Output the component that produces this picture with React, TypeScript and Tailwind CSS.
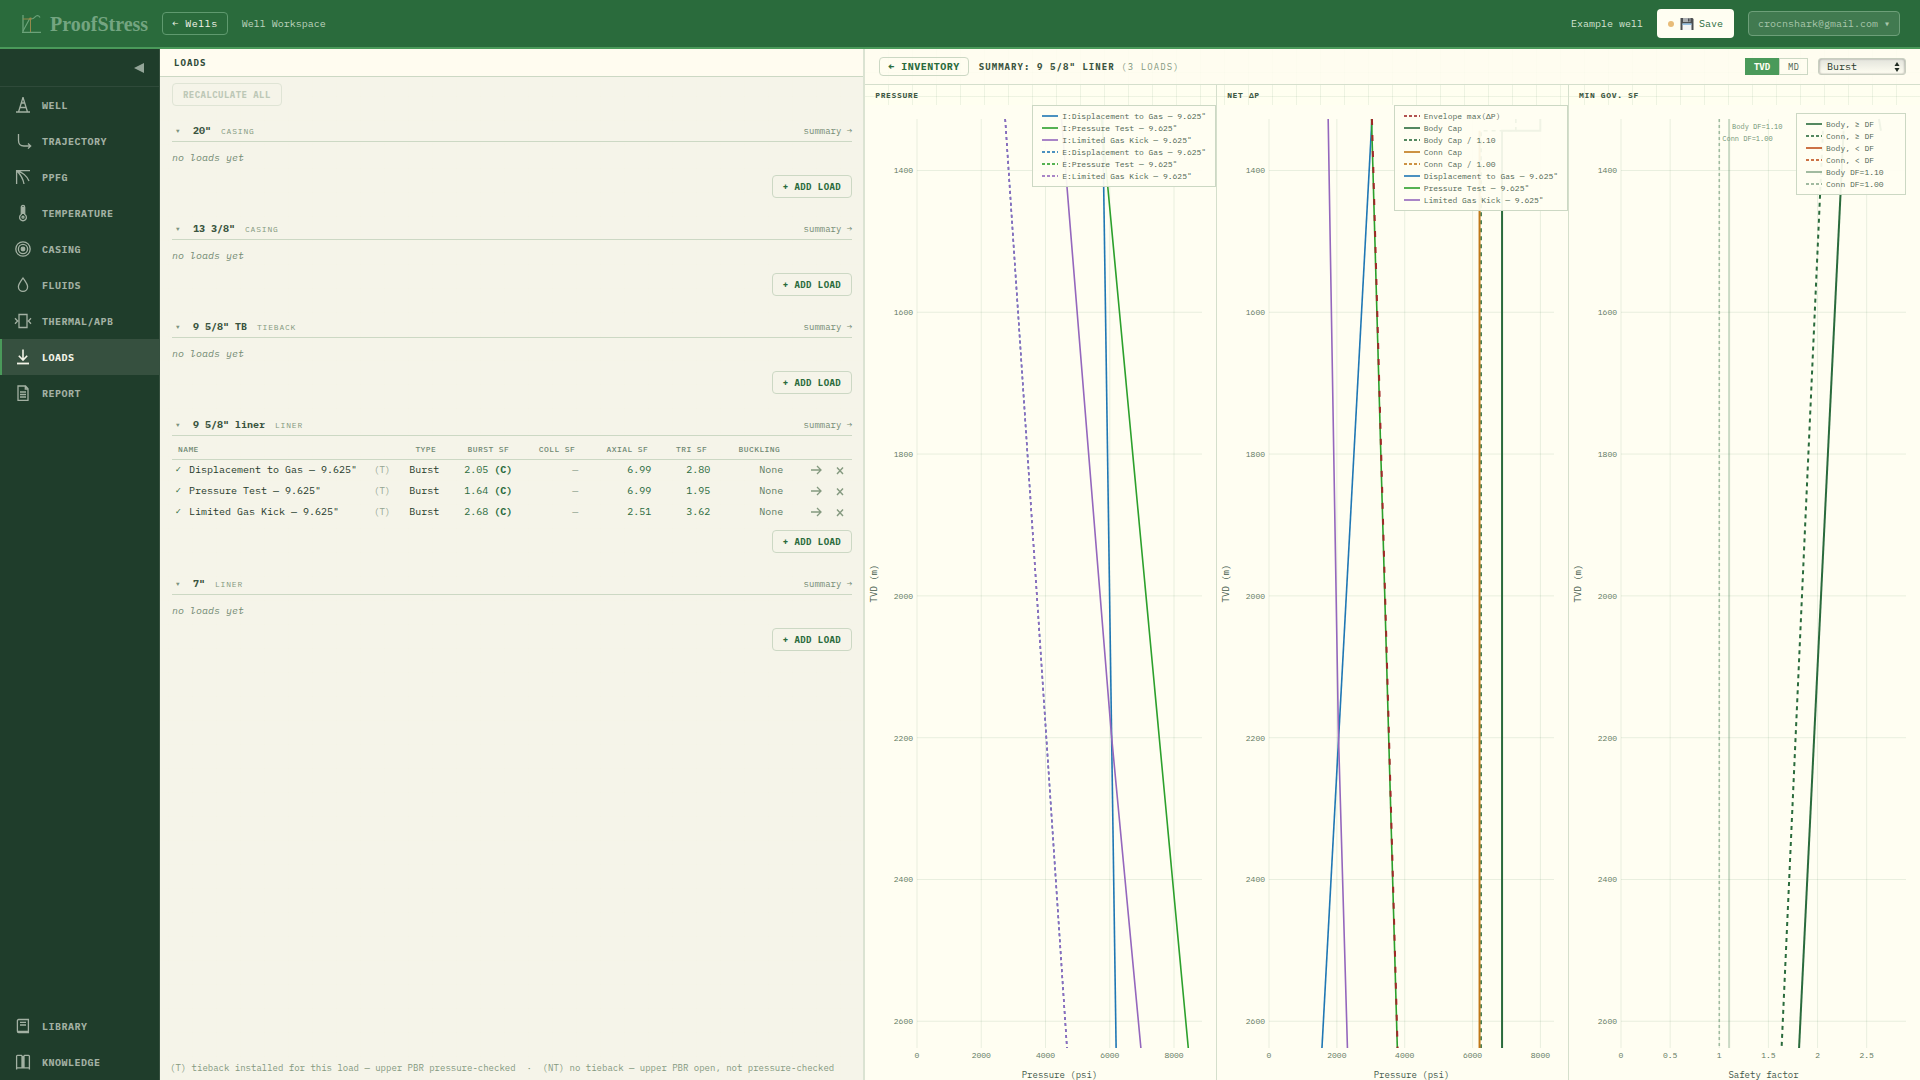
import React, { useLayoutEffect, useRef, useState } from "react";

type Load = { name: string; burst: string; axial: string; tri: string };
type Section = { title: string; kind: string; loads: Load[] };
type Line = {
  points: [number, number][];
  color: string;
  width?: number;
  dash?: string;
  opacity?: number;
};
type LegendItem = { label: string; color: string; dashed?: boolean };
type Note = { text: string; x: number; row: number };

const sections: Section[] = [
  { title: '20"', kind: "CASING", loads: [] },
  { title: '13 3/8"', kind: "CASING", loads: [] },
  { title: '9 5/8" TB', kind: "TIEBACK", loads: [] },
  {
    title: '9 5/8" liner',
    kind: "LINER",
    loads: [
      { name: 'Displacement to Gas — 9.625"', burst: "2.05", axial: "6.99", tri: "2.80" },
      { name: 'Pressure Test — 9.625"', burst: "1.64", axial: "6.99", tri: "1.95" },
      { name: 'Limited Gas Kick — 9.625"', burst: "2.68", axial: "2.51", tri: "3.62" },
    ],
  },
  { title: '7"', kind: "LINER", loads: [] },
];

const icons: Record<string, React.ReactNode> = {
  WELL: <path d="M9 1.5 4.5 16M9 1.5 13.5 16M2 16h14M7.3 7h3.4M6 11.5h6M8 2h2" />,
  TRAJECTORY: <path d="M4.5 2v6.5c0 4 2 5.5 5.5 5.5h6.5M14 11.5l2.7 2.5L14 16.6" />,
  PPFG: <path d="M16 2.6H2.6V16M3 3c5 1 10 5 12 10M3 3c3 3 6 7 7 13" />,
  TEMPERATURE: (
    <>
      <path d="M7.3 10.4V3.2a1.7 1.7 0 0 1 3.4 0v7.2a3.4 3.4 0 1 1-3.4 0z" />
      <path d="M9 3v7" strokeWidth="3" />
      <circle cx="9" cy="13.2" r="1" />
    </>
  ),
  CASING: (
    <>
      <circle cx="9" cy="9" r="7.2" />
      <circle cx="9" cy="9" r="4.6" />
      <circle cx="9" cy="9" r="1.8" fill="currentColor" />
    </>
  ),
  FLUIDS: <path d="M9 2C6.6 5.4 4.4 8 4.4 10.8a4.6 4.6 0 0 0 9.2 0C13.6 8 11.4 5.4 9 2z" />,
  "THERMAL/APB": <path d="M5 2.5h8v13H5zM1 6.3 3.6 9 1 11.7M17 6.3 14.4 9l2.6 2.7" />,
  LOADS: (
    <>
      <path d="M9 1.5v10.3M4.8 7.8 9 12l4.2-4.2" strokeWidth="1.6" />
      <path d="M3 15.5h12" strokeWidth="1.8" />
    </>
  ),
  REPORT: <path d="M4 2h7.5L14 4.7V16.3H4zM11.3 2v3H14M6 8h6M6 10.5h6M6 13h6" />,
  LIBRARY: <path d="M4.6 2.5h9.8v13H4.6a1.2 1.2 0 0 1-1.2-1.2V3.7a1.2 1.2 0 0 1 1.2-1.2zM6 5.4h6M6 8h6M3.6 14.4h10.6" />,
  KNOWLEDGE: <path d="M2.6 16.5V3.2c0-.4.4-.8.8-.8h3.8c.4 0 .8.4.8.8v11.6M15.4 16.5V3.2c0-.4-.4-.8-.8-.8h-3.8c-.4 0-.8.4-.8.8v11.6M2.6 14.9h12.8M9 3v11.5" />,
};

const topNav = ["WELL", "TRAJECTORY", "PPFG", "TEMPERATURE", "CASING", "FLUIDS", "THERMAL/APB", "LOADS", "REPORT"];
const bottomNav = ["LIBRARY", "KNOWLEDGE"];

const BLUE = "#1f77b4";
const GREEN = "#2ca02c";
const PURPLE = "#9467bd";
const FOREST = "#2a6b3c";
const ORANGE = "#c07818";
const RED = "#a02828";

const TOP = 1327.4;
const SHOE = 1344;
const BOTTOM = 2637.7;

const pressureLines: Line[] = [
  { points: [[5780, TOP], [6197, BOTTOM]], color: BLUE },
  { points: [[5740, TOP], [8443, BOTTOM]], color: GREEN },
  { points: [[4497, TOP], [6051, 2196], [6968, BOTTOM]], color: PURPLE },
  { points: [[2745, TOP], [4668, BOTTOM]], color: BLUE, dash: "3 3" },
  { points: [[2745, TOP], [4668, BOTTOM]], color: PURPLE, dash: "3 3" },
];

const netLines: Line[] = [
  { points: [[7997, TOP], [7997, SHOE], [6869, SHOE], [6869, BOTTOM]], color: FOREST, width: 2 },
  { points: [[7275, TOP], [7275, SHOE], [6250, SHOE], [6250, BOTTOM]], color: FOREST, dash: "4 4" },
  { points: [[6206, SHOE], [6206, BOTTOM]], color: ORANGE, width: 2 },
  { points: [[3034, TOP], [1561, BOTTOM]], color: BLUE },
  { points: [[3022, TOP], [3782, BOTTOM]], color: GREEN },
  { points: [[1744, TOP], [2047, 2196], [2312, BOTTOM]], color: PURPLE },
  { points: [[3034, TOP], [3790, BOTTOM]], color: RED, width: 2, dash: "6 10" },
];

const safetyLines: Line[] = [
  { points: [[1.1, TOP], [1.1, BOTTOM]], color: FOREST, width: 2, opacity: 0.25 },
  { points: [[1, TOP], [1, BOTTOM]], color: FOREST, dash: "3 3", opacity: 0.4 },
  { points: [[2.055, SHOE], [1.634, BOTTOM]], color: FOREST, width: 2, dash: "4 4" },
  { points: [[2.265, SHOE], [1.812, BOTTOM]], color: FOREST, width: 2 },
  { points: [[2.625, TOP], [2.645, SHOE]], color: FOREST, width: 2 },
];

const pressureLegend: LegendItem[] = [
  { label: 'I:Displacement to Gas — 9.625"', color: BLUE },
  { label: 'I:Pressure Test — 9.625"', color: GREEN },
  { label: 'I:Limited Gas Kick — 9.625"', color: PURPLE },
  { label: 'E:Displacement to Gas — 9.625"', color: BLUE, dashed: true },
  { label: 'E:Pressure Test — 9.625"', color: GREEN, dashed: true },
  { label: 'E:Limited Gas Kick — 9.625"', color: PURPLE, dashed: true },
];

const netLegend: LegendItem[] = [
  { label: "Envelope max(ΔP)", color: RED, dashed: true },
  { label: "Body Cap", color: FOREST },
  { label: "Body Cap / 1.10", color: FOREST, dashed: true },
  { label: "Conn Cap", color: ORANGE },
  { label: "Conn Cap / 1.00", color: ORANGE, dashed: true },
  { label: 'Displacement to Gas — 9.625"', color: BLUE },
  { label: 'Pressure Test — 9.625"', color: GREEN },
  { label: 'Limited Gas Kick — 9.625"', color: PURPLE },
];

const safetyLegend: LegendItem[] = [
  { label: "Body, ≥ DF", color: FOREST },
  { label: "Conn, ≥ DF", color: FOREST, dashed: true },
  { label: "Body, < DF", color: "#c0501c" },
  { label: "Conn, < DF", color: "#c0501c", dashed: true },
  { label: "Body DF=1.10", color: "#8aaa8c" },
  { label: "Conn DF=1.00", color: "#8aaa8c", dashed: true },
];

const NavItem = ({ name, active }: { name: string; active?: boolean }) => (
  <a
    href="#"
    className={
      active
        ? "flex h-9 items-center gap-2.5 border-l-2 border-[#4a9a5a] bg-[#36503f] pl-3 text-[#f4f4e8]"
        : "flex h-9 items-center gap-2.5 border-l-2 border-transparent pl-3 text-[#a3b1a3]"
    }
  >
    <svg viewBox="0 0 18 18" className="h-[18px] w-[18px]" fill="none" stroke="currentColor" strokeWidth="1.3">
      {icons[name]}
    </svg>
    <span className="text-[10px] font-bold tracking-wider">{name}</span>
  </a>
);

const Logo = () => (
  <svg viewBox="0 0 20 20" className="h-5 w-5" fill="none" strokeWidth="1">
    <path d="M1 1v17.3M0 18.3h19" stroke="#6ba37a" strokeWidth="1.3" />
    <path d="M1 17 7.5 5M9.5 4.5c2 1.5 3.5-3 6-3 1.5.4 2 1 2.5 2" stroke="#6ba37a" strokeWidth="1.2" />
    <path d="M1 5h7.5M8.5 5v13" stroke="#96894c" />
    <circle cx="8.5" cy="4.8" r="1.3" fill="#96894c" />
  </svg>
);

const Floppy = () => (
  <svg viewBox="0 0 14 14" className="h-3.5 w-3.5">
    <path d="M.5 1h12l1 1v11H.5z" fill="#4b4f52" />
    <path d="M3 1h7.5v4H3z" fill="#a9adb0" />
    <path d="M8 1.5h1.5v3H8z" fill="#4b4f52" />
    <path d="M2.5 6.5h9V13h-9z" fill="#f2f4f5" />
    <path d="M2.5 6.5h9v1.3h-9z" fill="#7db4e0" />
  </svg>
);

const Legend = ({ items, className }: { items: LegendItem[]; className: string }) => (
  <ul className={`absolute border border-[#ccd8c4] bg-[#fffef2]/93 px-[9px] py-1 ${className}`}>
    {items.map((item) => (
      <li key={item.label} className="flex h-3 items-center gap-1 whitespace-pre text-[8px] leading-3 text-[#4f6653]">
        <svg viewBox="0 0 16 2" className="h-0.5 w-4 opacity-80">
          <path d="M0 1h16" stroke={item.color} strokeWidth="2" strokeDasharray={item.dashed ? "3 2" : undefined} />
        </svg>
        {item.label}
      </li>
    ))}
  </ul>
);

// Depth chart. Scales are worked out from the measured size of the box.
const DepthChart = ({ xMax, xTicks, xLabel, lines, notes = [] }: {
  xMax: number;
  xTicks: number[];
  xLabel: string;
  lines: Line[];
  notes?: Note[];
}) => {
  const ref = useRef<HTMLDivElement>(null);
  const [size, setSize] = useState({ w: 352, h: 975 });

  useLayoutEffect(() => {
    const el = ref.current;
    if (!el) return;
    const measure = () => setSize({ w: el.clientWidth, h: el.clientHeight });
    measure();
    const observer = new ResizeObserver(measure);
    observer.observe(el);
    return () => observer.disconnect();
  }, []);

  const m = { top: 14, right: 14, bottom: 32, left: 52 };
  const px = (v: number) => m.left + (v / xMax) * (size.w - m.left - m.right);
  const py = (d: number) => m.top + ((d - TOP) / (BOTTOM - TOP)) * (size.h - m.top - m.bottom);
  const yTicks = [1400, 1600, 1800, 2000, 2200, 2400, 2600];
  const mid = m.top + (size.h - m.top - m.bottom) / 2;

  return (
    <div ref={ref} className="absolute inset-0">
      <svg width={size.w} height={size.h} className="block" fill="none">
        {xTicks.map((t) => (
          <path key={t} d={`M${px(t)} ${m.top}V${size.h - m.bottom}`} stroke="#2a6b3c" strokeOpacity="0.1" />
        ))}
        {yTicks.map((t) => (
          <path key={t} d={`M${m.left} ${py(t)}H${size.w - m.right}`} stroke="#2a6b3c" strokeOpacity="0.1" />
        ))}
        {lines.map((line, i) => (
          <polyline
            key={i}
            points={line.points.map(([x, d]) => `${px(x)},${py(d)}`).join(" ")}
            stroke={line.color}
            strokeWidth={line.width ?? 1.6}
            strokeDasharray={line.dash}
            strokeOpacity={line.opacity}
          />
        ))}
        <g className="fill-[#62795f] text-[8px]">
          {yTicks.map((t) => (
            <text key={t} x={m.left - 4} y={py(t) + 3} textAnchor="end">{t}</text>
          ))}
          {xTicks.map((t) => (
            <text key={t} x={px(t)} y={size.h - m.bottom + 10} textAnchor="middle">{t}</text>
          ))}
        </g>
        <g className="fill-[#6f9273] text-[7px]">
          {notes.map((n) => (
            <text key={n.text} x={px(n.x) + 3} y={m.top + 10 + n.row * 12}>{n.text}</text>
          ))}
        </g>
        <g className="fill-[#43594a] text-[9px]" textAnchor="middle">
          <text x={m.left + (size.w - m.left - m.right) / 2} y={size.h - 2}>{xLabel}</text>
          <text transform={`translate(12 ${mid}) rotate(-90)`}>TVD (m)</text>
        </g>
      </svg>
    </div>
  );
};

const Plot = ({ title, children }: { title: string; children: React.ReactNode }) => (
  <section className="flex min-w-0 flex-1 flex-col border-r border-[#d5dfcc] last:border-r-0">
    <h3 className="h-5 pl-2.5 text-[8px] font-bold leading-5 tracking-[0.08em] text-[#3f5a45]">{title}</h3>
    <div className="relative flex-1 bg-[#fffef2]">{children}</div>
  </section>
);

const LoadTable = ({ loads }: { loads: Load[] }) => (
  <table className="w-full table-fixed text-[10px]">
    <colgroup>
      <col className="w-4" />
      <col />
      <col className="w-6" />
      <col className="w-12" />
      <col className="w-[73px]" />
      <col className="w-[66px]" />
      <col className="w-[73px]" />
      <col className="w-[59px]" />
      <col className="w-[73px]" />
      <col className="w-10" />
      <col className="w-[26px]" />
    </colgroup>
    <thead>
      <tr className="h-[23px] border-b border-[#ccd8c4] text-right text-[8px] tracking-wider text-[#6f8872]">
        <th colSpan={3} className="pl-1.5 pt-1 text-left font-medium">NAME</th>
        <th className="pr-1.5 pt-1 font-medium">TYPE</th>
        <th className="pr-1.5 pt-1 font-medium">BURST SF</th>
        <th className="pr-1.5 pt-1 font-medium">COLL SF</th>
        <th className="pr-1.5 pt-1 font-medium">AXIAL SF</th>
        <th className="pr-1.5 pt-1 font-medium">TRI SF</th>
        <th className="pr-1.5 pt-1 font-medium">BUCKLING</th>
        <th colSpan={2}></th>
      </tr>
    </thead>
    <tbody>
      {loads.map((load) => (
        <tr key={load.name} className="h-[21px] text-right text-[#2a6b3c]">
          <td className="pl-[3px] text-left font-['DejaVu_Sans',sans-serif] text-[8px]">✓</td>
          <td className="whitespace-nowrap pl-px text-left text-[#1f3a2a]">{load.name}</td>
          <td className="pr-1 text-[9px] text-[#93a592]">(T)</td>
          <td className="pr-[3px] text-[#1f3a2a]">Burst</td>
          <td className="pr-[3px]">
            {load.burst} <b>(C)</b>
          </td>
          <td className="pr-[3px] text-[#93a592]">—</td>
          <td className="pr-[3px]">{load.axial}</td>
          <td className="pr-[3px]">{load.tri}</td>
          <td className="pr-[3px] text-[#5c7a62]">None</td>
          <td>
            <button aria-label={`Open ${load.name}`} className="flex w-full justify-end pr-1 text-[#84997f]">
              <svg viewBox="0 0 12 10" className="h-2.5 w-3" fill="none" stroke="currentColor" strokeWidth="1.3">
                <path d="M1 5h10M7 1l4 4-4 4" />
              </svg>
            </button>
          </td>
          <td>
            <button aria-label={`Delete ${load.name}`} className="flex w-full justify-end pr-2 text-[#84997f]">
              <svg viewBox="0 0 8 10" className="h-2.5 w-2" fill="none" stroke="currentColor" strokeWidth="1.4">
                <path d="M1 2.5l6 6.500M7 2.5l-6 6.500" />
              </svg>
            </button>
          </td>
        </tr>
      ))}
    </tbody>
  </table>
);

const LoadSection = ({ section }: { section: Section }) => (
  <section className="mb-5">
    <div className="flex h-[22px] items-center border-b border-[#ccd8c4]">
      <button aria-label="Collapse" className="w-[21px] pl-1 pt-0.5 text-left text-[6px] text-[#7d957f]">▼</button>
      <h3 className="whitespace-pre text-[10px] font-bold text-[#3a5440]">{section.title}</h3>
      <span className="ml-2.5 text-[8px] tracking-widest text-[#84997f]">{section.kind}</span>
      <a href="#" className="ml-auto text-[9px] text-[#748b74]">summary →</a>
    </div>
    {section.loads.length > 0 ? (
      <LoadTable loads={section.loads} />
    ) : (
      <p className="pb-px pt-2 text-[10px] italic leading-4 text-[#748b74]">no loads yet</p>
    )}
    <div className="mt-2 flex justify-end">
      <button className="h-[23px] rounded-sm border border-[#ccd8c4] px-2.5 text-[9px] font-bold tracking-wider text-[#2a6b3c]">
        + ADD LOAD
      </button>
    </div>
  </section>
);

const App = () => {
  return (
    <div className="flex h-screen flex-col bg-[#fffff0] bg-[linear-gradient(to_right,#2a6b3c14_1px,transparent_1px),linear-gradient(to_bottom,#2a6b3c14_1px,transparent_1px)] bg-size-[24px_24px] font-['IBM_Plex_Mono','Liberation_Mono',monospace] text-[10px] text-[#1f3a2a]">
      <header className="flex h-[49px] shrink-0 items-center border-b-2 border-[#4a9a5a] bg-[#2a6b3c] pl-[22px] pr-5 text-[#d5e4d3]">
        <Logo />
        <span className="ml-2 font-['Liberation_Serif',serif] text-xl font-bold text-[#74a581]">ProofStress</span>
        <button className="ml-3.5 h-[23px] rounded-sm border border-[#5f9a6f] px-[9px] tracking-wider text-[#f4f4e8]">← Wells</button>
        <span className="ml-3.5 text-[#bdd3bd]">Well Workspace</span>
        <span className="ml-auto">Example well</span>
        <button className="ml-3.5 flex h-[29px] items-center rounded-sm bg-[#fffef2] px-[11px] text-[#2a6b3c]">
          <span className="h-1.5 w-1.5 rounded-full bg-[#e8bc78]" />
          <span className="ml-1.5 mr-[5px]"><Floppy /></span>
          Save
        </button>
        <button className="ml-3.5 h-[25px] rounded-sm border border-[#6d9f79] bg-[#417a50] px-[9px] text-[#a9c7ac]">
          crocnshark@gmail.com ▾
        </button>
      </header>

      <div className="flex min-h-0 flex-1">
        <nav className="flex w-40 shrink-0 flex-col border-r border-[#36503f] bg-[#1f3d2b]">
          <div className="flex h-[38px] items-center justify-end border-b border-[#2f4a3a] pr-[15px]">
            <button aria-label="Collapse menu" className="text-[#93a598]">
              <svg viewBox="0 0 10 10" className="h-2.5 w-2.5">
                <path d="M10 0v10L0 5z" fill="currentColor" />
              </svg>
            </button>
          </div>
          {topNav.map((name) => (
            <NavItem key={name} name={name} active={name === "LOADS"} />
          ))}
          <div className="mt-auto">
            {bottomNav.map((name) => (
              <NavItem key={name} name={name} />
            ))}
          </div>
        </nav>

        <main className="flex min-w-0 flex-2 flex-col border-r-2 border-[#dbe3d2] bg-[#f4f3e8]/95">
          <h2 className="h-7 shrink-0 border-b border-[#ccd8c4] bg-[#fffcf0] pl-3.5 text-[9px] font-bold leading-7 tracking-[0.12em] text-[#2f4a38]">
            LOADS
          </h2>
          <div className="flex-1 px-3 pr-[11px] pt-1.5">
            <button disabled className="mb-3.5 block h-[23px] rounded-sm border border-[#dfe4d5] px-2.5 text-[9px] font-bold tracking-wider text-[#bdc8b7]">
              RECALCULATE ALL
            </button>
            {sections.map((section) => (
              <LoadSection key={section.title} section={section} />
            ))}
          </div>
          <p className="whitespace-nowrap px-2.5 pb-1 text-[9px] leading-4 text-[#84997f]">
            (T) tieback installed for this load — upper PBR pressure-checked &nbsp;·&nbsp; (NT) no tieback — upper PBR open, not pressure-checked
          </p>
        </main>

        <div className="flex min-w-0 flex-3 flex-col">
          <div className="flex h-9 shrink-0 items-center border-b border-[#d5dfcc] bg-[#fffdf0]/85 pl-3.5 pr-3.5">
            <button className="h-[19px] rounded-sm border border-[#ccd8c4] px-2 font-bold tracking-wider text-[#2a6b3c]">
              ← INVENTORY
            </button>
            <h2 className="ml-2.5 text-[9px] font-bold tracking-[0.12em] text-[#3a5440]">
              SUMMARY: 9 5/8" LINER <span className="font-normal text-[#84997f]">(3 LOADS)</span>
            </h2>
            <div className="ml-auto flex h-[17px] text-[9px]">
              <button className="w-[34px] bg-[#4a9a5a] font-bold text-[#fffef2]">TVD</button>
              <button className="w-[29px] border border-[#ccd8c4] text-[#4f6653]">MD</button>
            </div>
            <div className="relative ml-2.5">
              <select
                aria-label="Load case"
                className="block h-[17px] w-[88px] appearance-none rounded-[3px] border border-[#c9cfc0] bg-linear-to-b from-[#e3e4dc] to-[#fffef2] pl-2 text-[10px] shadow-[inset_1px_0_2px_#00000033,inset_-1px_0_2px_#00000033]"
              >
                <option>Burst</option>
                <option>Collapse</option>
                <option>Axial</option>
              </select>
              <svg viewBox="0 0 6 10" className="pointer-events-none absolute right-1.5 top-1 h-2.5 w-1.5">
                <path d="M3 0l2.5 4h-5zM3 10l2.5-4h-5z" fill="#1f2a22" />
              </svg>
            </div>
          </div>
          <div className="flex min-h-0 flex-1">
            <Plot title="PRESSURE">
              <DepthChart xMax={8870} xTicks={[0, 2000, 4000, 6000, 8000]} xLabel="Pressure (psi)" lines={pressureLines} />
              <Legend items={pressureLegend} className="right-0 top-0" />
            </Plot>
            <Plot title="NET ΔP">
              <DepthChart xMax={8400} xTicks={[0, 2000, 4000, 6000, 8000]} xLabel="Pressure (psi)" lines={netLines} />
              <Legend items={netLegend} className="right-0 top-0" />
            </Plot>
            <Plot title="MIN GOV. SF">
              <DepthChart
                xMax={2.9}
                xTicks={[0, 0.5, 1, 1.5, 2, 2.5]}
                xLabel="Safety factor"
                lines={safetyLines}
                notes={[
                  { text: "Body DF=1.10", x: 1.1, row: 0 },
                  { text: "Conn DF=1.00", x: 1, row: 1 },
                ]}
              />
              <Legend items={safetyLegend} className="right-3.5 top-2 w-[110px]" />
            </Plot>
          </div>
        </div>
      </div>
    </div>
  );
};

export default App;
